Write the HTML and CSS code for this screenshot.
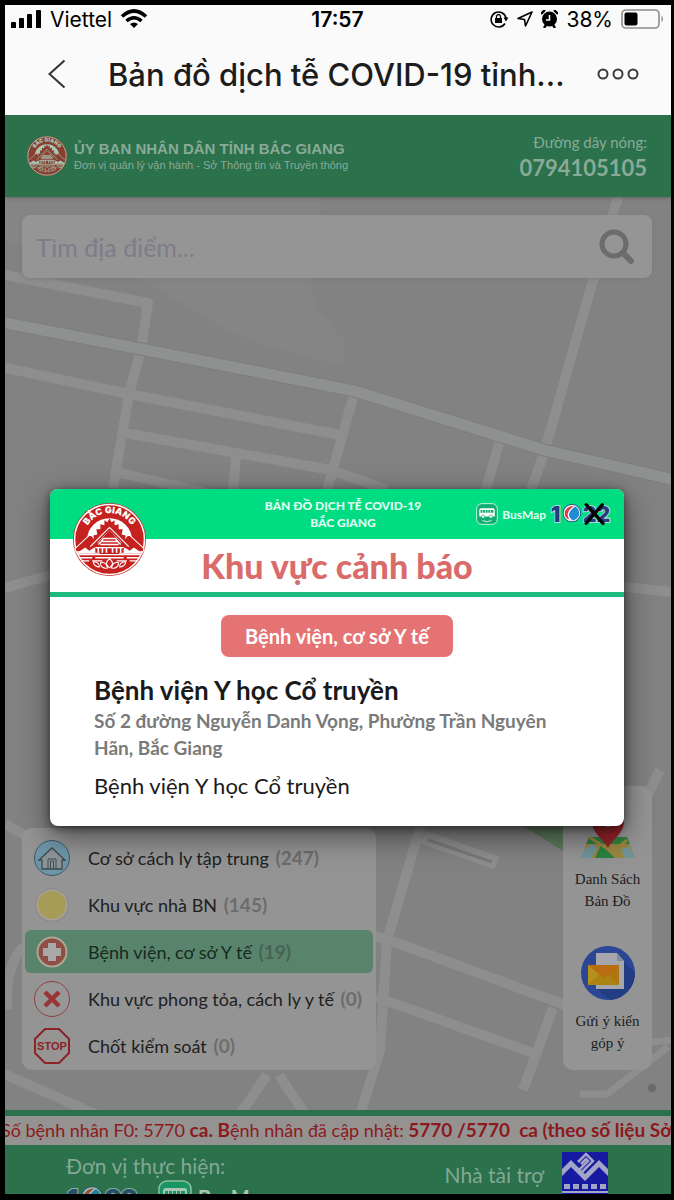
FILE: index.html
```html
<!DOCTYPE html>
<html lang="vi">
<head>
    <meta charset="UTF-8">
    <meta name="viewport" content="width=device-width, initial-scale=1">
    <title>Bản đồ dịch tễ COVID-19 tỉnh Bắc Giang</title>
    <link rel="stylesheet" href="styles.css">
</head>
<body>
    <!-- shared logos -->
    <svg class="defs" aria-hidden="true">
        <symbol id="emblem" viewBox="0 0 72 72">
            <circle cx="36" cy="36" r="36" fill="#c4282a"/>
            <circle cx="36" cy="36" r="34.5" fill="#c4211f" stroke="#fff" stroke-width="1.5"/>
            <path d="M14 46V36a22 21 0 0 1 44 0v10z" fill="#fff"/>
            <path d="M2 45l15-14 8 8 4 9H3zM70 45L55 31l-8 8-4 9h26z" fill="#c4211f" stroke="#fff"/>
            <path d="M3 50l9-6 4 3 5-3 6 6zM69 50l-9-6-4 3-5-3-6 6z" fill="#fff"/>
            <path d="M36 15l2 4 3-2 0 5 4-1 0 5 4 0-1 5 4 1-1 4 3 2-4 3-14-14-14 14-4-3 3-2-1-4 4-1-1-5 4 0 0-5 4 1 0-5 3 2z" fill="#c4211f"/>
            <path d="M36 24L17 43M36 24l19 19" stroke="#fff" stroke-width="1.2"/>
            <path d="M36 27L22 42v7h28v-7z" fill="#c4211f"/>
            <path d="M30 35h12l2 3H28zM25 41l3-3h16l3 3M22 44h28M27 41h18" fill="none" stroke="#fff" stroke-width="1.4"/>
            <path d="M25 44v5M29 44v5M33 44v5M39 44v5M43 44v5M47 44v5" stroke="#fff" stroke-width="1.6"/>
            <path d="M5 51h62M6 54h13m3 0h28m3 0h13M8 57h8m3 0h10m14 0h10m3 0h8" stroke="#fff" stroke-width="1.3"/>
            <path d="M36 55c4 3 4 6 0 9-4-3-4-6 0-9zM34 64c-4 1-7-1-7-5 4-1 6 1 7 5zM38 64c4 1 7-1 7-5-4-1-6 1-7 5zM26 63c-3 0-6-2-6-5 4 0 6 2 6 5zM46 63c3 0 6-2 6-5-4 0-6 2-6 5z" fill="none" stroke="#fff"/>
        </symbol>
        <symbol id="bus" viewBox="0 0 34 34">
            <rect x="1" y="1" width="32" height="32" rx="8" fill="#12ad72" stroke="#c8f7e2" stroke-width="1.5"/>
            <path d="M5 11q0-3 3-3h18q3 0 3 3v10H5z" fill="#fff"/>
            <path d="M7 11h3v4H7zM11 11h3v4h-3zM15 11h3v4h-3zM19 11h3v4h-3zM23 11h4v4h-4z" fill="#12ad72"/>
            <circle cx="11" cy="21" r="2.5" fill="#fff" stroke="#12ad72"/>
            <circle cx="23" cy="21" r="2.5" fill="#fff" stroke="#12ad72"/>
            <path d="M10 27q7 4 14 0" fill="none" stroke="#c8f7e2" stroke-width="1.5"/>
        </symbol>
        <symbol id="globe" viewBox="0 0 22 22">
            <circle cx="11" cy="11" r="9" fill="#1f8ad6"/>
            <path d="M15 2C7 0 0 7 2 14c1 4 5 6 8 5-5-4-5-10 5-17z" fill="#e23b45" stroke="#fff" stroke-width="1.5"/>
            <circle cx="11" cy="11" r="9.500" fill="none" stroke="#e8eef8" stroke-width="1.500"/>
            <circle cx="11" cy="11" r="10.400" fill="none" stroke="#243b7c"/>
        </symbol>
    </svg>

    <div class="phone">
        <div class="status">
            <div class="status-left">
                <svg width="31" height="18" viewBox="0 0 31 18"><path d="M0 13q0-1 1-1h3q1 0 1 1v5H0zM8 9q0-1 1-1h3q1 0 1 1v9H8zM16 5q0-1 1-1h3q1 0 1 1v13h-5zM25 1q0-1 1-1h3q1 0 1 1v17h-5z"/></svg>
                <span>Viettel</span>
                <svg width="28" height="20" viewBox="0 0 28 20"><g fill="none" stroke="#000" stroke-width="3.6"><path d="M2 7.5q12-11 24 0"/><path d="M6.500 12q7.500-6.500 15 0"/></g><path d="M14 19l-4-4q4-3 8 0z"/></svg>
            </div>
            <time>17:57</time>
            <div class="status-right">
                <svg width="19" height="18" viewBox="0 0 19 18"><path d="M15 13.500A7.500 7.500 0 1 1 16 8" fill="none" stroke="#000" stroke-width="1.6"/><path d="M13.500 7.500h5l-2.500 4z"/><rect x="5" y="8" width="7" height="5"/><path d="M6.500 8V6q2-3 4 0v2" fill="none" stroke="#000" stroke-width="1.3"/></svg>
                <svg width="16" height="16" viewBox="0 0 16 16"><path d="M15 1L1 7.500l6.500 1L8.500 15z" fill="none" stroke="#000" stroke-width="1.6" stroke-linejoin="round"/></svg>
                <svg width="17" height="18" viewBox="0 0 17 18"><circle cx="8.500" cy="9" r="7.500"/><path d="M0 4l4-4M17 4l-4-4M3 18l2-3M14 18l-2-3" stroke="#000" stroke-width="2.4"/><path d="M8.500 5v5H5" fill="none" stroke="#fff" stroke-width="1.5"/></svg>
                <span>38%</span>
                <svg width="43" height="20" viewBox="0 0 43 20"><rect x="1" y="1" width="37" height="18" rx="4" fill="none" stroke="#8c8c8c" stroke-width="1.6"/><rect x="3.500" y="3.500" width="13" height="13" rx="2"/><path d="M40.500 6.500q3 3.500 0 7z" fill="#8c8c8c"/></svg>
            </div>
        </div>

        <div class="nav">
            <button class="icon-btn" aria-label="Quay lại">
                <svg width="18" height="30" viewBox="0 0 18 30"><path d="M16.500 1.500L1.500 15l15 13.500" fill="none" stroke="#333" stroke-width="2"/></svg>
            </button>
            <h1>Bản đồ dịch tễ COVID-19 tỉnh...</h1>
            <button class="icon-btn" aria-label="Menu">
                <svg width="42" height="12" viewBox="0 0 42 12"><g fill="none" stroke="#3a3a3a" stroke-width="2"><circle cx="6" cy="6" r="4.500"/><circle cx="21" cy="6" r="4.500"/><circle cx="36" cy="6" r="4.500"/></g></svg>
            </button>
        </div>

        <div class="app">
            <header class="top">
                <svg class="top-logo" viewBox="0 0 72 72">
                    <use href="#emblem"/>
                    <path id="arc-small" d="M12 28a25 25 0 0 1 48 0" fill="none"/>
                    <text class="emblem-name"><textPath href="#arc-small" startOffset="50%" text-anchor="middle">BẮC GIANG</textPath></text>
                </svg>
                <div class="owner">
                    <strong>ỦY BAN NHÂN DÂN TỈNH BẮC GIANG</strong>
                    <span>Đơn vị quản lý vận hành - Sở Thông tin và Truyền thông</span>
                </div>
                <div class="call">
                    <span>Đường dây nóng:</span>
                    <a href="tel:0794105105">0794105105</a>
                </div>
            </header>

            <main class="map">
                <svg class="roads" viewBox="5 197 666 913" preserveAspectRatio="xMidYMid slice" aria-hidden="true">
                    <path d="M5 197H322L310 280 318 310 346 343 342 366Q270 348 232 333L142 280 5 240z" fill="#858585"/>
                    <path d="M525 827l38 24v-24z" fill="#5d7a5b"/>
                    <g fill="none" stroke="#8e8e8e" stroke-width="10" stroke-linejoin="round">
                        <path d="M5 275L148 303 141 349 129 394 113 488"/>
                        <path d="M5 368L129 394 340 435M355 391L327 490"/>
                        <path d="M125 433L331 470 387 490M120 473L215 495M236 457L233 490"/>
                        <path d="M499 443L486 490M620 190L593 280 545 450 531 490"/>
                        <path d="M5 588L60 572M615 586L680 593"/>
                        <path d="M5 824L30 838M7 1010Q5 965 24 946M660 770L645 800"/>
                        <path d="M421 825L387 940 380 1050 361 1112"/>
                        <path d="M375 936L400 944 565 1005M376 997L533 1053M553 1008L523 1090"/>
                        <path d="M423 837L497 863" stroke-width="14"/>
                        <path d="M0 1072L95 1114M267 1075L240 1114M279 1075L305 1114"/>
                        <path d="M580 1094H607L668 1047M650 1042L675 1040" stroke-width="7"/>
                    </g>
                    <path d="M428 840L492 862" stroke="#7a7a7a" stroke-width="3"/>
                    <path d="M5 323L141 349 355 391 544 450 675 480" fill="none" stroke="#7c7e7d" stroke-width="13"/>
                    <path d="M5 323L141 349 355 391 544 450 675 480" fill="none" stroke="#8f9090" stroke-width="11"/>
                    <circle cx="652" cy="1088" r="4" fill="#6b6b6b"/>
                </svg>

                <form class="search">
                    <input type="text" placeholder="Tìm địa điểm..." aria-label="Tìm địa điểm">
                    <button type="button" class="icon-btn" aria-label="Tìm kiếm">
                        <svg width="35" height="35" viewBox="0 0 35 35"><g fill="none" stroke="#6c6c6c" stroke-linecap="round"><circle cx="15" cy="15" r="12" stroke-width="5"/><path d="M24 24l8 8" stroke-width="6"/></g></svg>
                    </button>
                </form>

                <div class="panels">
                    <ul class="legend">
                        <li>
                            <svg viewBox="0 0 36 36"><circle cx="18" cy="18" r="17.500" fill="#6d96a8" stroke="#3d5866"/><path d="M5 20L18 8l13 12h-3v9H8v-9z" fill="#8d9497" stroke="#3e4a50" stroke-width="1.3"/><path d="M14 29V19h8v10M16.500 29v-8h3v8" fill="none" stroke="#3e4a50"/></svg>
                            <a href="#">Cơ sở cách ly tập trung <b>(247)</b></a>
                        </li>
                        <li>
                            <svg viewBox="0 0 36 36"><circle cx="18" cy="18" r="15" fill="#a69b57" stroke="#a8a39a" stroke-width="2"/><circle cx="18" cy="18" r="16.300" fill="none" stroke="#7d7a72" stroke-width=".6"/></svg>
                            <a href="#">Khu vực nhà BN <b>(145)</b></a>
                        </li>
                        <li class="active">
                            <svg viewBox="0 0 36 36"><circle cx="18" cy="18" r="14.500" fill="#8f4f45" stroke="#b0a597" stroke-width="2"/><path d="M14 9h8v5h5v8h-5v5h-8v-5H9v-8h5z" fill="#a9a9a9"/></svg>
                            <a href="#">Bệnh viện, cơ sở Y tế <b>(19)</b></a>
                        </li>
                        <li>
                            <svg viewBox="0 0 36 36"><circle cx="18" cy="18" r="17.500" fill="#989696" stroke="#8f3f40"/><path d="M11 11l14 14M25 11L11 25" stroke="#993537" stroke-width="4.500"/></svg>
                            <a href="#">Khu vực phong tỏa, cách ly y tế <b>(0)</b></a>
                        </li>
                        <li>
                            <svg viewBox="0 0 36 36"><path d="M11 1h14l10 10v14L25 35H11L1 25V11z" fill="#979494" stroke="#8a2428" stroke-width="2"/><text class="stop" x="18" y="22" text-anchor="middle">STOP</text></svg>
                            <a href="#">Chốt kiểm soát <b>(0)</b></a>
                        </li>
                    </ul>

                    <div class="tools">
                        <a href="#">
                            <svg width="54" height="54" viewBox="0 0 54 54"><path d="M8 33h38l8 21H0z" fill="#9a8740"/><path d="M8 33h38l3 7H5z" fill="#317f41"/><path d="M3 46l8-6 6 4-7 10H0zM40 46l8-4 6 12H44z" fill="#71949b"/><path d="M14 54l6-13 14 13z" fill="#2a8440"/><path d="M8 33l33 21M46 36L33 47" stroke="#9a8740" stroke-width="3"/><path d="M27 44C22 34 11 30 11 17a16 16 0 0 1 32 0c0 13-11 17-16 27z" fill="#962328"/><circle cx="27" cy="17" r="6" fill="#999"/></svg>
                            <span>Danh Sách Bản Đồ</span>
                        </a>
                        <a href="#">
                            <svg width="54" height="54" viewBox="0 0 54 54"><circle cx="27" cy="27" r="27" fill="#2b4694"/><path d="M43 16l11 11A27 27 0 0 1 30 54L15 43z" fill="#233d83"/><path d="M15 7h21l7 8v28H15z" fill="#a6a7ac"/><path d="M36 7v8h7z" fill="#828a9f"/><path d="M7 19h31v20H7z" fill="#b07512"/><path d="M7 19l15 12L7 39z" fill="#b5901a"/><path d="M7 39l12-11h7l12 11z" fill="#ac8213"/><path d="M7 19h31L23 32z" fill="#b96d12"/></svg>
                            <span>Gửi ý kiến góp ý</span>
                        </a>
                    </div>
                </div>
            </main>

            <p class="ticker">Số bệnh nhân F0: 5770 <b>ca. B</b>ệnh nhân đã cập nhật: <b>5770 /5770 &nbsp;ca (theo số liệu Sở</b></p>

            <footer class="bottom">
                <div class="makers">
                    <span>Đơn vị thực hiện:</span>
                    <div class="logos">
                        <svg width="76" height="24" viewBox="0 0 76 24"><text class="digits" x="1" y="22">1</text><text class="digits" x="39" y="22">22</text><use href="#globe" x="15" y="1" width="22" height="22"/></svg>
                        <svg width="34" height="34"><use href="#bus"/></svg>
                        <b>BusMap</b>
                    </div>
                </div>
                <div class="sponsor">
                    <span>Nhà tài trợ</span>
                    <svg width="46" height="46" viewBox="0 0 46 46"><path d="M0 0h46v46H0z" fill="#161aa0"/><path d="M0 17L9 8l14 14 14-14 9 9v7L37 15 23 29 9 15 0 24z" fill="#a3a5c6"/><path d="M16 10l8-8 7 7-11 11M19 12l5-5 2 2-9 9" fill="none" stroke="#a3a5c6" stroke-width="2.500"/><path d="M2 32h6v5H2zM11 32h6v5h-6zM20 32h6v5h-6zM29 32h6v5h-6zM38 32h6v5h-6zM0 39h46v2H0z" fill="#a3a5c6"/></svg>
                </div>
            </footer>

            <div class="overlay">
                <section class="modal" role="dialog" aria-labelledby="modal-title">
                    <div class="modal-head">
                        <p>BẢN ĐỒ DỊCH TỄ COVID-19<br>BẮC GIANG</p>
                        <div class="brands">
                            <svg width="22" height="22"><use href="#bus"/></svg>
                            <b>BusMap</b>
                            <svg width="64" height="24" viewBox="0 0 76 28"><text class="digits" x="1" y="23">1</text><text class="digits" x="39" y="23">22</text><use href="#globe" x="15" y="2" width="22" height="22"/><path d="M43 3l20 22M62 3L43 25" stroke="#000" stroke-width="4" stroke-linecap="round"/></svg>
                        </div>
                    </div>
                    <svg class="modal-logo" viewBox="0 0 72 72">
                        <use href="#emblem"/>
                        <path id="arc" d="M12 28a25 25 0 0 1 48 0" fill="none"/>
                        <text class="emblem-name"><textPath href="#arc" startOffset="50%" text-anchor="middle">BẮC GIANG</textPath></text>
                    </svg>
                    <h2 id="modal-title">Khu vực cảnh báo</h2>
                    <div class="modal-body">
                        <span class="tag">Bệnh viện, cơ sở Y tế</span>
                        <h3>Bệnh viện Y học Cổ truyền</h3>
                        <address>Số 2 đường Nguyễn Danh Vọng, Phường Trần Nguyên Hãn, Bắc Giang</address>
                        <p>Bệnh viện Y học Cổ truyền</p>
                    </div>
                </section>
            </div>
        </div>
    </div>
</body>
</html>
```
FILE: styles.css
```css
* {
    margin: 0;
    padding: 0;
    box-sizing: border-box;
    list-style: none;
}
body {
    background: #000;
    font-family: Lato, "Noto Sans", sans-serif;
}
a {
    color: inherit;
    text-decoration: none;
}
svg {
    flex: none;
    display: block;
}
button,
input {
    border: 0;
    background: none;
    font: inherit;
}
.defs {
    position: absolute;
    width: 0;
    height: 0;
}
.emblem-name {
    font: 900 9px Inter, sans-serif;
    fill: #fff;
}
.digits {
    font: 900 25px Inter, sans-serif;
    fill: #243b7c;
    stroke: #c9dcea;
    stroke-width: 2;
    paint-order: stroke;
}
.stop {
    font: bold 11px "Liberation Sans", sans-serif;
    fill: #8a2428;
}
.phone {
    display: flex;
    flex-direction: column;
    height: 100vh;
    border: solid #000;
    border-width: 5px 3px 6px 5px;
    background: #fafafa;
}

/* status bar */
.status {
    display: grid;
    grid-template-columns: 1fr auto 1fr;
    align-items: center;
    height: 28px;
    padding: 0 7px 0 6px;
    font: 21px Inter, sans-serif;
}
.status time {
    font-weight: 600;
}
.status-left,
.status-right {
    display: flex;
    align-items: center;
    gap: 8px;
}
.status-right {
    justify-content: flex-end;
}

/* title bar */
.nav {
    display: flex;
    align-items: center;
    height: 82px;
    padding: 0 32px 0 43px;
    font-family: Inter, sans-serif;
}
.nav h1 {
    flex: 1;
    padding-left: 42px;
    font-size: 31px;
    font-weight: 500;
    color: #1c1c1c;
    white-space: nowrap;
}
.icon-btn {
    cursor: pointer;
}

.app {
    position: relative;
    display: flex;
    flex: 1;
    flex-direction: column;
    min-height: 0;
    overflow: hidden;
}
.top {
    position: relative;
    z-index: 1;
    display: flex;
    align-items: center;
    gap: 7px;
    height: 82px;
    padding: 0 24px 0 22px;
    background: #2b714b;
    color: #8aaa99;
    box-shadow: 0 1px 4px #666;
}
.top-logo {
    width: 40px;
    height: 40px;
    opacity: .6;
}
.owner {
    display: flex;
    flex: 1;
    flex-direction: column;
    font-family: "Liberation Sans", sans-serif;
    white-space: nowrap;
}
.owner strong {
    font-size: 15px;
    line-height: 18px;
}
.owner span {
    font-size: 11px;
    line-height: 14px;
}
.call {
    display: flex;
    flex-direction: column;
    text-align: right;
    font-size: 15px;
    line-height: 24px;
}
.call a {
    font-size: 22px;
    line-height: 28px;
    font-weight: bold;
}

/* map */
.map {
    position: relative;
    display: flex;
    flex: 1;
    flex-direction: column;
    justify-content: space-between;
    min-height: 0;
    padding: 18px 19px 40px 17px;
    background: #828282;
}
.roads {
    position: absolute;
    inset: 0;
    width: 100%;
    height: 100%;
}
.search {
    position: relative;
    display: flex;
    align-items: center;
    height: 63px;
    padding: 0 18px 0 14px;
    border-radius: 8px;
    background: #959595;
    box-shadow: 0 1px 4px #7c7c7c;
}
.search input {
    flex: 1;
    min-width: 0;
    font-size: 25px;
}
.search input::placeholder {
    color: #7e7c88;
}
.panels {
    position: relative;
    display: flex;
    align-items: flex-end;
    justify-content: space-between;
}
.legend {
    display: flex;
    flex-direction: column;
    gap: 4px;
    padding: 8px 3px 3px;
    border-radius: 10px;
    background: #949494;
}
.legend li {
    display: flex;
    align-items: center;
    gap: 18px;
    height: 43px;
    padding: 0 11px 0 9px;
    border-radius: 6px;
    font-size: 18px;
    color: #202020;
}
.legend svg {
    width: 36px;
    height: 36px;
}
.legend b {
    margin-left: 2px;
    font-size: 19px;
    color: #6c6c6c;
}
.legend .active {
    background: #59846c;
    color: #16291f;
}
.legend .active b {
    color: #466354;
}
.tools {
    display: flex;
    flex-direction: column;
    gap: 34px;
    width: 89px;
    padding: 18px 8px 16px;
    border-radius: 10px;
    background: #949494;
}
.tools a {
    display: flex;
    flex-direction: column;
    align-items: center;
    gap: 10px;
    font: 15px/22px "Liberation Serif", serif;
    text-align: center;
    color: #1c1c1c;
}

/* bottom bars */
.ticker {
    height: 35px;
    border-top: 6px solid #2b714b;
    background: #959292;
    font-size: 18px;
    line-height: 28px;
    text-indent: -4px;
    color: #8c1a1c;
    white-space: nowrap;
}
.ticker b {
    font-size: 19px;
}
.bottom {
    display: flex;
    justify-content: space-between;
    height: 49px;
    padding: 7px 63px 0 61px;
    background: #2b714b;
    font-size: 21px;
    color: #84a896;
}
.makers {
    display: flex;
    flex-direction: column;
    line-height: 28px;
}
.logos {
    display: flex;
    align-items: center;
    gap: 6px;
    opacity: .6;
}
.logos svg + svg {
    margin-left: 10px;
}
.logos b {
    font-size: 20px;
    color: #fff;
}
.sponsor {
    display: flex;
    gap: 18px;
    line-height: 46px;
}

/* dialog */
.overlay {
    position: absolute;
    inset: 0;
    z-index: 2;
    display: flex;
    align-items: center;
    padding: 6px 47px 0 45px;
}
.modal {
    position: relative;
    flex: 1;
    border-radius: 8px;
    background: #fff;
    box-shadow: 0 10px 30px rgba(0, 0, 0, .5), 0 2px 8px rgba(0, 0, 0, .5);
}
.modal-head {
    display: grid;
    grid-template-columns: 1fr auto 1fr;
    align-items: center;
    height: 50px;
    padding: 0 10px;
    border-radius: 8px 8px 0 0;
    background: #00dc82;
    color: #e2fff2;
}
.modal-head p {
    grid-column: 2;
    padding-left: 12px;
    font-size: 12px;
    line-height: 17px;
    font-weight: 900;
    text-align: center;
}
.brands {
    display: flex;
    align-items: center;
    justify-content: flex-end;
    gap: 4px;
    font-size: 12px;
}
.modal-logo {
    position: absolute;
    left: 23px;
    top: 14px;
    width: 73px;
    height: 73px;
}
.modal h2 {
    height: 58px;
    border-bottom: 5px solid #1dba7e;
    font-size: 34px;
    line-height: 53px;
    font-weight: 900;
    text-align: center;
    color: #d96b6b;
}
.modal-body {
    display: flex;
    flex-direction: column;
    padding: 18px 44px 25px;
}
.tag {
    align-self: center;
    padding: 0 24px;
    border-radius: 8px;
    background: #e57373;
    font-size: 20px;
    line-height: 42px;
    font-weight: bold;
    color: #fff;
}
.modal h3 {
    margin-top: 16px;
    font-size: 26px;
    line-height: 34px;
    color: #1a1a1a;
}
address {
    font-size: 19px;
    line-height: 27px;
    font-style: normal;
    font-weight: bold;
    color: #7a7a7a;
}
.modal-body p {
    margin-top: 10px;
    font-size: 22px;
    line-height: 30px;
    color: #1a1a1a;
}
```
